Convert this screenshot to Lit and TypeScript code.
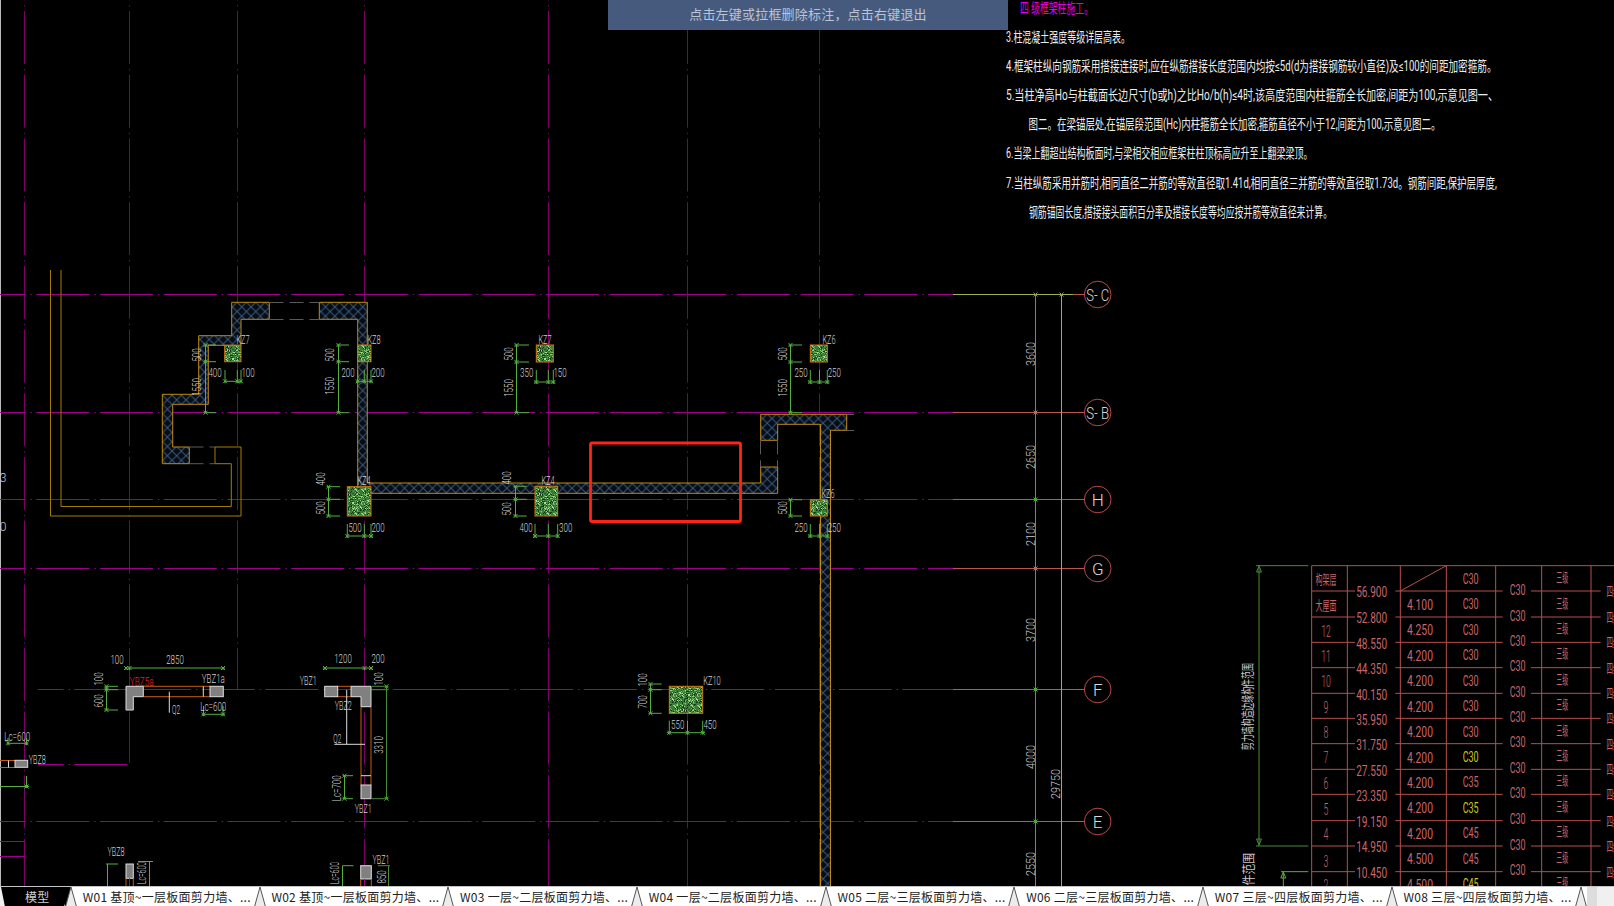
import { LitElement, html, css, svg } from 'lit';
import { customElement } from 'lit/decorators.js';

type Pt = [number, number];

const line = (x1: number, y1: number, x2: number, y2: number, cls: string) =>
  svg`<line x1=${x1} y1=${y1} x2=${x2} y2=${y2} class=${cls}></line>`;

// y is the vertical centre of the text, len squeezes it to the narrow CAD look
const txt = (x: number, y: number, s: string, cls: string, len?: number, rot = false) =>
  svg`<text x=${x} y=${y} class=${cls} textLength=${len ?? ''} lengthAdjust="spacingAndGlyphs"
    transform=${rot ? `rotate(-90 ${x} ${y})` : ''}>${s}</text>`;

const dimText = (x: number, y: number, s: string, rot = false) => txt(x, y, s, 'd', s.length * 4.4, rot);

const tick = (x: number, y: number) =>
  svg`<path class="dim" d="M${x - 2} ${y + 2}L${x + 2} ${y - 2}M${x - 2} ${y - 2}L${x + 2} ${y + 2}"></path>`;

const vdim = (x: number, ys: number[], extTo: number) => svg`
  ${line(x, ys[0], x, ys[ys.length - 1], 'dim')}
  ${ys.map((y) => svg`${line(x - 2, y, extTo, y, 'dim')}${tick(x, y)}`)}`;

const hdim = (y: number, x0: number, x1: number, ticks: number[], top: number) => svg`
  ${line(x0, y, x1, y, 'dim')}
  ${ticks.map((x) => svg`${line(x, top, x, y + 2, 'dim')}${tick(x, y)}`)}`;

const poly = (pts: Pt[], cls: string, fill = 'none') =>
  svg`<polygon points=${pts.map((p) => p.join(',')).join(' ')} class=${cls} fill=${fill}></polygon>`;

const polyline = (pts: Pt[], cls: string) =>
  svg`<polyline points=${pts.map((p) => p.join(',')).join(' ')} class=${cls}></polyline>`;

// coordinates read from 3x crops
const z3 = (x: number, y: number): Pt => [+(x / 3).toFixed(1), +(y / 3 + 260).toFixed(1)];
const z6 = (x: number, y: number): Pt => [+(x / 3).toFixed(1), +(y / 3 + 640).toFixed(1)];

const hAxes: [number, number][] = [
  [294.5, 0], [412.5, 0], [499.5, 0], [568.5, 0], [689.5, 38], [821.5, 0],
];
const vAxes: [number, number][] = [
  [24.5, 886], [129.5, 763], [237.5, 690], [364.5, 886], [548.5, 886], [687.5, 886], [819.5, 886],
];
const bubbles: [number, string, number?][] = [
  [294.5, 'S- C', 23], [412.5, 'S- B', 23], [499.5, 'H'], [568.5, 'G'], [689.5, 'F'], [821.5, 'E'],
];
const axisDims: [number, number, string][] = [
  [1030, 354, '3600'], [1030, 457, '2650'], [1030, 534, '2100'],
  [1030, 630, '3700'], [1030, 757, '4000'], [1030, 864, '2550'],
];

const notes: [number, number, number, string, string?][] = [
  [1020, 1093, 8, '四 级框架柱施工。', 'pink'],
  [1006, 1130, 36.7, '3.柱混凝土强度等级详层高表。'],
  [1006, 1496.5, 65.7, '4.框架柱纵向钢筋采用搭接连接时,应在纵筋搭接长度范围内均按≤5d(d为搭接钢筋较小直径)及≤100的间距加密箍筋。'],
  [1006, 1498, 95, '5.当柱净高Ho与柱截面长边尺寸(b或h)之比Ho/b(h)≤4时,该高度范围内柱箍筋全长加密,间距为100,示意见图一、'],
  [1028.6, 1440.5, 124, '图二。在梁锚层处,在锚层段范围(Hc)内柱箍筋全长加密,箍筋直径不小于12,间距为100,示意见图二。'],
  [1006, 1312.5, 153.3, '6.当梁上翻超出结构板面时,与梁相交相应框架柱柱顶标高应升至上翻梁梁顶。'],
  [1006, 1497, 183, '7.当柱纵筋采用并筋时,相同直径二并筋的等效直径取1.41d,相同直径三并筋的等效直径取1.73d。钢筋间距,保护层厚度,'],
  [1029, 1332, 212.3, '钢筋锚固长度,搭接接头面积百分率及搭接长度等均应按并筋等效直径来计算。'],
];

const columns: [number, number, number, number][] = [
  [224.7, 345.3, 241, 361.7], [357.7, 345, 371, 361.7], [347.3, 486.7, 371, 516],
  [536.3, 345, 553.3, 362], [810.3, 345, 827.3, 362], [535, 486.3, 557.7, 516],
  [810.3, 499.7, 827.3, 516], [669.3, 686.3, 702.7, 713.3],
];

const colLabels: [number, number, string][] = [
  [243, 340, 'KZ7'], [374, 340, 'KZ8'], [364, 481, 'KZ4'], [545, 340, 'KZ7'],
  [829, 340, 'KZ6'], [548, 481, 'KZ4'], [828, 494, 'KZ6'], [712, 681, 'KZ10'],
];

const dimLabels: [number, number, string, boolean?][] = [
  [197, 355, '500', true], [197, 387, '1550', true], [215, 373, '400'], [248, 373, '100'],
  [330, 355, '500', true], [330, 386, '1550', true], [348, 373, '200'], [378, 373, '200'],
  [320.7, 479, '400', true], [320.7, 508, '500', true], [355, 527.7, '500'], [378, 527.7, '200'],
  [509.3, 354, '500', true], [509.3, 388, '1550', true], [526.7, 373, '350'], [560, 373, '150'],
  [783.3, 354, '500', true], [783.3, 388, '1550', true], [801, 373, '250'], [834.3, 373, '250'],
  [507.3, 478, '400', true], [507.3, 509, '500', true], [526, 527.7, '400'], [565.7, 527.7, '300'],
  [783.3, 508, '500', true], [801, 527.7, '250'], [834.3, 527.7, '250'],
  [642.7, 680, '100', true], [642.7, 702, '700', true], [677.7, 725, '550'], [710, 725, '450'],
  [117, 660, '100'], [175, 660, '2850'], [99, 679, '100', true], [99, 701, '600', true],
  [343, 659, '1200'], [378, 659, '200'], [379, 679, '100', true], [379, 745, '3310', true],
  [382, 877, '850', true],
];

const tableY = (y: number) => y / 3 + 555;
const tableX = (x: number) => x / 3 + 1220;
const ruleYs = [108, 186, 262, 338, 415, 490, 566, 643, 718, 797, 873, 950];
const floors: [number, string][] = [
  [72, '构架层'], [150, '大屋面'], [228, '12'], [304, '11'], [380, '10'], [456, '9'],
  [532, '8'], [608, '7'], [685, '6'], [762, '5'], [838, '4'], [918, '3'], [990, '2'],
];
const levels = ['56.900', '52.800', '48.550', '44.350', '40.150', '35.950', '31.750', '27.550', '23.350', '19.150', '14.950', '10.450'];
const heights = ['4.100', '4.250', '4.200', '4.200', '4.200', '4.200', '4.200', '4.200', '4.200', '4.200', '4.500', '4.500'];
const concrete: [string, boolean?][] = [
  ['C30'], ['C30'], ['C30'], ['C30'], ['C30'], ['C30'], ['C30'], ['C30', true],
  ['C35'], ['C35', true], ['C45'], ['C45'], ['C45', true],
];

const tabs = [
  'W01 基顶~一层板面剪力墙、...',
  'W02 基顶~一层板面剪力墙、...',
  'W03 一层~二层板面剪力墙、...',
  'W04 一层~二层板面剪力墙、...',
  'W05 二层~三层板面剪力墙、...',
  'W06 二层~三层板面剪力墙、...',
  'W07 三层~四层板面剪力墙、...',
  'W08 三层~四层板面剪力墙、...',
];

// concrete fill, deterministic so each run looks the same
function speckles() {
  const out = [];
  let seed = 17;
  const next = () => {
    seed = (Math.imul(seed, 1103515245) + 12345) & 0x7fffffff;
    return seed >> 12;
  };
  const colors = ['#8ed080', '#16401c', '#68b45a', '#a8dc98', '#245c26', '#123416', '#56a04c'];
  for (let i = 0; i < 420; i++) {
    const x = next() % 24;
    const y = next() % 24;
    out.push(svg`<rect x=${x} y=${y} width="1" height="1" fill=${colors[next() % colors.length]}></rect>`);
  }
  return out;
}

const grey = (x1: number, y1: number, x2: number, y2: number) => {
  const [a, b] = z6(x1, y1);
  const [c, d] = z6(x2, y2);
  return svg`<rect x=${a} y=${b} width=${c - a} height=${d - b} class="edge"></rect>`;
};
const z6line = (x1: number, y1: number, x2: number, y2: number, cls: string) => {
  const [a, b] = z6(x1, y1);
  const [c, d] = z6(x2, y2);
  return line(a, b, c, d, cls);
};

@customElement('app-root')
export class AppRoot extends LitElement {
  static styles = css`
    :host {
      display: flex;
      flex-direction: column;
      position: relative;
      width: 1614px;
      height: 906px;
      background: #000;
      overflow: hidden;
      font-family: Roboto, 'Noto Sans CJK SC', sans-serif;
    }
    .canvas {
      display: block;
      width: 1614px;
      height: 886px;
      flex: none;
    }
    .banner {
      position: absolute;
      left: 608px;
      top: 0;
      width: 400px;
      height: 30px;
      padding-bottom: 3px;
      box-sizing: border-box;
      display: flex;
      align-items: center;
      justify-content: center;
      background: #465a7e;
      color: #b9c4d8;
      font: 13px 'Liberation Serif', 'Noto Sans CJK SC', serif;
      letter-spacing: 0.2px;
    }

    line, polyline, path, circle { fill: none; stroke-width: 1; }
    .h-axis { stroke: #9c0088; stroke-dasharray: 53 5 1.4 4.3; stroke-dashoffset: 27.4; }
    .v-axis { stroke: #7c0066; stroke-dasharray: 53 5 1.4 4.3; stroke-dashoffset: 52.7; }
    .plain-axis { stroke: #9c0088; }
    .tail { stroke: #b85850; }
    .grid-green { stroke: #96b450; }
    .grid-red { stroke: #c86060; }
    .bubble { stroke: #b84a4a; }
    .dim { stroke: #56b040; }
    .dim-dark { stroke: #4a8a38; }
    .frame { stroke: #bbb; }
    .wall { stroke: #c08a10; }
    .old { stroke: #a67c00; }
    .void { stroke: #5a5a5a; stroke-dasharray: 14 6; }
    .col { stroke: #d07810; }
    .red-box { fill: none; stroke: #ff2414; stroke-width: 2.8; }
    .edge { fill: #808080; stroke: #ddd; stroke-width: 1; }
    .rc { stroke: #c85a10; }
    .leader { stroke: #ddd; }
    .table { stroke: #b84e4e; }

    text {
      dominant-baseline: central;
      text-anchor: middle;
      font-weight: 300;
      fill: #d4d4d4;
    }
    .d { font-size: 12px; fill: #d0d0d0; }
    .ax { font-size: 13px; fill: #c8c8c8; }
    .bt { font-size: 17px; fill: #d8d8d8; }
    .note { font-size: 14px; text-anchor: start; fill: #ececec; font-weight: 400; }
    .note.pink { fill: #e000e0; }
    .red-t { font-size: 12px; fill: #f02020; }
    .tb { font-size: 14px; fill: #c8666a; font-weight: 400; }
    .tb-big { font-size: 16px; fill: #c8666a; }
    .tb-cjk { font-size: 13px; fill: #c8666a; font-weight: 400; }
    .tb-y { font-size: 14px; fill: #c8c820; font-weight: 400; }
    .scope { font-size: 13px; fill: #c8c8c8; font-weight: 400; }

    .tabs {
      flex: 1;
      display: flex;
      align-items: stretch;
      background: #fff;
      border-top: 1px solid #c4c4c4;
      box-sizing: border-box;
      font: 12px 'Noto Sans CJK SC', sans-serif;
      color: #222;
    }
    .tab {
      flex: none;
      width: 176.7px;
      padding: 0 0 2px 5.7px;
      box-sizing: border-box;
      display: flex;
      align-items: center;
      white-space: nowrap;
      overflow: hidden;
      letter-spacing: 0.27px;
    }
    .tab.active {
      width: 60px;
      padding-left: 20px;
      background: #000;
      color: #d0d0d0;
      border-bottom-right-radius: 4px;
    }
    .sep { flex: none; width: 12px; height: 100%; display: block; }
    .sep.first { width: 5px; }
    .scroll {
      flex: 1;
      display: flex;
      align-items: center;
      background: #f0f0f0;
    }
    .scroll .prev {
      width: 10px;
      height: 100%;
      display: flex;
      align-items: center;
      justify-content: center;
      background: #ddd;
      margin-right: 5px;
    }
    .arrow { width: 8px; height: 10px; display: block; }
    .arrow.off { fill: #aaa; }
    .arrow.on { fill: #000; }
  `;

  private drawing() {
    return svg`
      <defs>
        <pattern id="hatch" patternUnits="userSpaceOnUse" width="9.3" height="9.3">
          <rect width="9.3" height="9.3" fill="#080c14"></rect>
          <path d="M0 0L9.3 9.3M9.3 0L0 9.3" stroke="#35587e" stroke-width="1" fill="none"></path>
        </pattern>
        <pattern id="conc" patternUnits="userSpaceOnUse" width="24" height="24">
          <rect width="24" height="24" fill="#3c7a38"></rect>
          ${speckles()}
        </pattern>
      </defs>

      ${line(0.5, 0, 0.5, 886, 'frame')}
      ${vAxes.map(([x, end]) => line(x, 0, x, end, 'v-axis'))}
      ${hAxes.map(([y, start]) => line(start, y, 953, y, 'h-axis'))}
      ${line(38, 764.5, 129.5, 764.5, 'h-axis')}
      ${line(0, 841.5, 24.5, 841.5, 'plain-axis')}
      ${line(0, 856.5, 24.5, 856.5, 'plain-axis')}

      ${line(953, 294.5, 1073, 294.5, 'grid-green')}
      ${line(1073, 294.5, 1084.5, 294.5, 'tail')}
      ${hAxes.slice(1).map(([y]) => line(953, y, 1084.5, y, 'tail'))}
      ${line(1035.5, 294.5, 1035.5, 886, 'grid-red')}
      ${line(1061.5, 294.5, 1061.5, 886, 'grid-green')}
      ${hAxes.map(([y]) => tick(1035.5, y))}
      ${tick(1061.5, 294.5)}
      ${axisDims.map(([x, y, s]) => txt(x, y, s, 'ax', 24, true))}
      ${txt(1055.7, 784, '29750', 'ax', 30, true)}
      ${bubbles.map(([y, s, len]) => svg`
        <circle cx="1097.7" cy=${y} r="13.3" class="bubble"></circle>
        ${txt(1097.7, y, s, 'bt', len)}`)}

      ${polyline([[50.5, 270], [50.5, 516], [241, 516], [241, 447], [215, 447], [215, 463.7], [231.3, 463.7], [231.3, 506.5], [61, 506.5], [61, 270]], 'old')}

      ${poly([z3(695, 127), z3(808, 127), z3(808, 178), z3(723, 178), z3(723, 256), z3(625, 256), z3(625, 433), z3(518, 433), z3(518, 561), z3(568, 561), z3(568, 611), z3(487, 611), z3(487, 403), z3(596, 403), z3(596, 227), z3(695, 227)], 'wall', 'url(#hatch)')}
      ${poly([[319.3, 302.3], [367.3, 302.3], [367.3, 483], [760.7, 483], [760.7, 467], [777.7, 467], [777.7, 493.3], [357.7, 493.3], [357.7, 319.3], [319.3, 319.3]], 'wall', 'url(#hatch)')}
      ${poly([[760.7, 414.3], [846.7, 414.3], [846.7, 430.3], [830.5, 430.3], [830.5, 890], [820.5, 890], [820.5, 424.3], [777.7, 424.3], [777.7, 440.3], [760.7, 440.3]], 'wall', 'url(#hatch)')}
      ${line(269.5, 302.5, 319.3, 302.5, 'void')}
      ${line(269.5, 319.5, 319.3, 319.5, 'void')}
      ${line(189.5, 447, 215, 447, 'void')}
      ${line(189.5, 463.7, 215, 463.7, 'void')}
      ${line(760.5, 440.3, 760.5, 467, 'void')}
      ${line(777.5, 440.3, 777.5, 467, 'void')}
      ${line(846.7, 414.5, 854, 414.5, 'void')}
      ${line(846.7, 430.5, 854, 430.5, 'void')}

      ${columns.map(([x1, y1, x2, y2]) => svg`
        <rect x=${x1} y=${y1} width=${x2 - x1} height=${y2 - y1} class="col" fill="url(#conc)"></rect>`)}

      ${vdim(205.5, [345, 361.7, 412.7], 216)}
      ${hdim(381.3, 224, 242, [225, 237.3, 241], 370)}
      ${vdim(338.5, [345, 361.7, 412.7], 349)}
      ${hdim(381.3, 356, 372.7, [357.7, 364.3, 371], 370)}
      ${vdim(328.5, [486.7, 499.3, 516], 340)}
      ${hdim(536, 346, 373, [347.3, 364.3, 371], 524)}
      ${vdim(516.5, [345, 362, 412.7], 529)}
      ${hdim(382, 534, 555, [536.3, 548.3, 553.3], 370)}
      ${vdim(790.5, [345, 362, 412.7], 802)}
      ${hdim(382, 808, 829.5, [810.3, 819.5, 827.3], 370)}
      ${vdim(515.5, [486.3, 499.3, 516], 526.7)}
      ${hdim(536, 533, 559.3, [535, 548.3, 557.7], 524)}
      ${vdim(790.5, [499.7, 516], 802)}
      ${hdim(536, 808, 829.5, [810.3, 819.5, 827.3], 524)}
      ${vdim(650.5, [684, 689.7, 713.3], 661.7)}
      ${hdim(732.7, 666.7, 705, [669.3, 687.5, 702.7], 720.7)}

      ${z6line(430, 139, 630, 139, 'rc')}
      ${z6line(430, 170, 630, 170, 'rc')}
      ${poly([z6(378, 139), z6(430, 139), z6(430, 170), z6(400, 170), z6(400, 210), z6(378, 210)], 'edge')}
      ${grey(630, 139, 670, 170)}
      ${z6line(610, 139, 610, 170, 'leader')}
      ${z6line(508, 155, 508, 218, 'leader')}
      ${hdim(668, 125, 225, [126, 129.5, 223], 668)}
      ${vdim(106.5, [686.3, 689.7, 710], 118)}
      ${hdim(714.3, 201.7, 225, [203.5, 223], 706)}
      ${txt(141.7, 681.5, 'YBZ5a', 'red-t', 24)}
      ${txt(213.3, 678.7, 'YBZ1a', 'd', 23)}
      ${txt(176, 709.5, 'Q2', 'd', 8)}
      ${txt(213.3, 706.7, 'Lc=600', 'd', 26)}

      ${z6line(1013, 139, 1053, 139, 'rc')}
      ${z6line(1013, 170, 1053, 170, 'rc')}
      ${z6line(1083, 200, 1083, 435, 'rc')}
      ${z6line(1113, 200, 1113, 435, 'rc')}
      ${grey(974, 139, 1013, 170)}
      ${poly([z6(1053, 139), z6(1113, 139), z6(1113, 200), z6(1083, 200), z6(1083, 170), z6(1053, 170)], 'edge')}
      ${grey(1083, 435, 1113, 476)}
      ${z6line(1083, 407, 1113, 407, 'leader')}
      ${z6line(1040, 150, 1040, 313, 'leader')}
      ${z6line(1003, 313, 1095, 313, 'leader')}
      ${hdim(668, 323, 372.7, [325, 364.5, 371], 668)}
      ${line(386.5, 686.3, 386.5, 798.7, 'dim-dark')}
      ${line(372, 686.3, 388.5, 686.3, 'dim-dark')}
      ${line(372, 689.7, 388.5, 689.7, 'dim-dark')}
      ${line(372, 798.7, 388.5, 798.7, 'dim-dark')}
      ${tick(386.5, 686.3)}${tick(386.5, 798.7)}
      ${vdim(344.5, [775.7, 798.7], 353)}
      ${txt(308.3, 681.3, 'YBZ1', 'd', 17)}
      ${txt(343.3, 706, 'YBZ2', 'd', 17)}
      ${txt(337.3, 739.3, 'Q2', 'd', 8)}
      ${txt(363.3, 808.7, 'YBZ1', 'd', 17)}
      ${txt(337.3, 788.3, 'Lc=700', 'd', 26, true)}

      ${txt(17.3, 736.7, 'Lc=600', 'd', 26)}
      ${hdim(743.3, 6.7, 28.3, [8, 26.5], 738)}
      ${line(0, 760.5, 15, 760.5, 'rc')}
      ${line(0, 767.5, 15, 767.5, 'rc')}
      ${line(8.5, 760.5, 8.5, 767.5, 'leader')}
      <rect x="15" y="760.3" width="12.7" height="7" class="edge"></rect>
      ${txt(37.3, 760, 'YBZ8', 'd', 17)}
      ${line(0, 786.5, 29, 786.5, 'dim')}
      ${line(26.5, 776, 26.5, 788, 'dim')}
      ${tick(26.5, 786.5)}

      ${txt(116, 851.7, 'YBZ8', 'd', 17)}
      <rect x="126" y="864" width="7.3" height="14.3" class="edge"></rect>
      ${line(126, 878.3, 126, 888, 'rc')}
      ${line(133.3, 878.3, 133.3, 888, 'rc')}
      ${line(129.5, 878.3, 129.5, 888, 'plain-axis')}
      ${line(106, 864, 118, 864, 'dim')}
      ${line(107.5, 864, 107.5, 886, 'dim')}
      ${line(138, 861.5, 153, 861.5, 'dim')}
      ${line(149.5, 861.5, 149.5, 886, 'dim')}
      ${txt(141.7, 873, 'Lc=600', 'd', 22, true)}
      <rect x="360.7" y="865.7" width="10.6" height="13.3" class="edge"></rect>
      ${line(360.7, 879, 360.7, 888, 'rc')}
      ${line(371.3, 879, 371.3, 888, 'rc')}
      ${line(364.5, 879, 364.5, 888, 'plain-axis')}
      ${txt(381, 860, 'YBZ1', 'd', 17)}
      ${line(378, 865.7, 390, 865.7, 'dim-dark')}
      ${line(388.5, 865.7, 388.5, 886, 'dim-dark')}
      ${line(342.5, 865.7, 353.5, 865.7, 'dim')}
      ${line(342.5, 865.7, 342.5, 886, 'dim')}
      ${txt(335, 873, 'Lc=600', 'd', 22, true)}
      ${txt(3, 477.7, '3', 'd')}
      ${txt(3, 527, '0', 'd')}

      ${colLabels.map(([x, y, s]) => dimText(x, y, s))}
      ${dimLabels.map(([x, y, s, r]) => dimText(x, y, s, r))}

      <rect x="590.5" y="443" width="150" height="78.5" rx="1.5" class="red-box"></rect>

      ${notes.map(([x0, x1, y, s, tone]) => txt(x0, y, s, `note ${tone ?? ''}`, x1 - x0))}

      ${this.table()}
    `;
  }

  private table() {
    const colXs = [275, 382, 541, 679, 827, 965, 1113].map(tableX);
    const top = tableY(32);
    return svg`
      ${line(tableX(108), top, tableX(265), top, 'dim-dark')}
      ${line(tableX(108), tableY(873), tableX(265), tableY(873), 'dim-dark')}
      ${line(tableX(117), top, tableX(117), tableY(873), 'dim-dark')}
      <path class="dim-dark" d="M1256.5 572L1259 566L1261.5 572ZM1256.5 839L1259 845L1261.5 839Z"></path>
      ${line(tableX(183), tableY(950), tableX(265), tableY(950), 'dim')}
      ${line(tableX(190), tableY(950), tableX(190), 886, 'dim')}
      <path class="dim" d="M1280.8 878L1283.3 872L1285.8 878Z"></path>
      ${txt(1248, 706.7, '剪力墙构造边缘构件范围', 'scope', 87, true)}
      ${txt(1248, 896, '约束边缘构件范围', 'scope', 86, true)}

      ${line(colXs[0], top, 1614, top, 'table')}
      ${colXs.map((x) => line(x, top, x, 886, 'table'))}
      ${line(colXs[2], tableY(108), colXs[3], top, 'table')}
      ${ruleYs.map((y) => svg`
        ${line(colXs[0], tableY(y), tableX(405), tableY(y), 'table')}
        ${line(tableX(526), tableY(y), tableX(848), tableY(y), 'table')}
        ${line(tableX(933), tableY(y), tableX(1142), tableY(y), 'table')}`)}

      ${floors.map(([y, s], i) =>
        txt(1326, tableY(y), s, i < 2 ? 'tb-cjk' : 'tb-big', i < 2 ? 21 : s.length * 4.8))}
      ${levels.map((s, i) => txt(1371.7, tableY(ruleYs[i] + 4), s, 'tb', 31))}
      ${heights.map((s, i) => txt(1420, tableY(150 + i * 76.3), s, 'tb', 26))}
      ${concrete.map(([s, hot], i) => txt(1470.7, tableY(72 + i * 76.3), s, hot ? 'tb-y' : 'tb', 16))}
      ${ruleYs.map((y) => txt(1517.7, tableY(y - 4), 'C30', 'tb', 16))}
      ${[...Array(13).keys()].map((i) => txt(1562.3, tableY(68 + i * 76.2), '三级', 'tb-cjk', 12))}
      ${ruleYs.map((y) => txt(1613, tableY(y + 1), '四级', 'tb-cjk', 13))}
    `;
  }

  private sep(dark = false) {
    return html`<svg class="sep" viewBox="0 0 12 20" preserveAspectRatio="none">
      ${dark ? svg`<path d="M0 0H6L1 20H0Z" style="fill:#000;stroke:none"></path>` : ''}
      <path d="M6 0L1 18Q0.5 20 0 20H12Q11.5 20 11 18Z" style="fill:#ececec;stroke:none"></path>
      <path d="M6 0L1 18Q0.5 20 0 20M6 0L11 18Q11.5 20 12 20" style="fill:none;stroke:#555;stroke-width:1"></path>
    </svg>`;
  }

  render() {
    return html`
      <svg class="canvas" viewBox="0 0 1614 886">${this.drawing()}</svg>
      <div class="banner">点击左键或拉框删除标注，点击右键退出</div>
      <div class="tabs">
        <svg class="sep first" viewBox="0 0 5 20" preserveAspectRatio="none">
          <path d="M0 0H1L5 20H0Z" style="fill:#f0f0f0;stroke:none"></path>
          <path d="M1 0L5 20H5V0Z" style="fill:#000;stroke:none"></path>
        </svg>
        <div class="tab active">模型</div>
        ${this.sep(true)}
        ${tabs.map((t) => html`<div class="tab">${t}</div>${this.sep()}`)}
        <div class="scroll">
          <div class="prev">
            <svg class="arrow off" viewBox="0 0 8 10"><path d="M7 0V10L1 5Z" style="stroke:none"></path></svg>
          </div>
          <svg class="arrow on" viewBox="0 0 8 10"><path d="M1 0V10L7 5Z" style="stroke:none"></path></svg>
        </div>
      </div>
    `;
  }
}

declare global {
  interface HTMLElementTagNameMap {
    'app-root': AppRoot;
  }
}
